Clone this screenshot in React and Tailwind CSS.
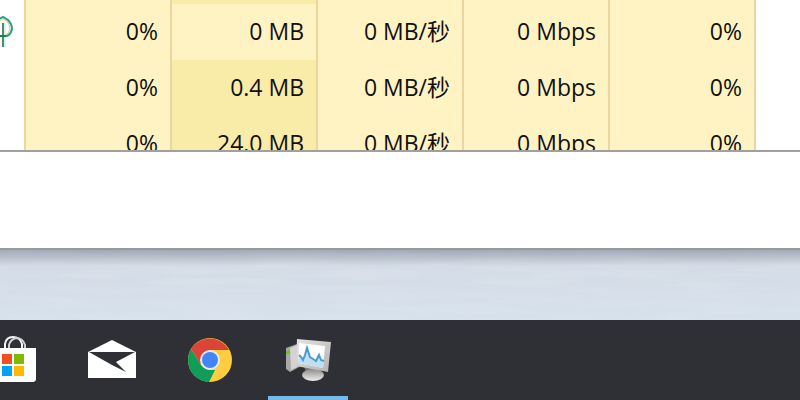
const columns = [
	{ key: "cpu", label: "CPU" },
	{ key: "memory", label: "Memory" },
	{ key: "disk", label: "Disk" },
	{ key: "network", label: "Network" },
	{ key: "gpu", label: "GPU" },
];

const processes = [
	{ id: 1, suspended: true, cpu: "0%", memory: "0 MB", disk: "0 MB/秒", network: "0 Mbps", gpu: "0%" },
	{ id: 2, cpu: "0%", memory: "0.4 MB", disk: "0 MB/秒", network: "0 Mbps", gpu: "0%", busy: true },
	{ id: 3, cpu: "0%", memory: "24.0 MB", disk: "0 MB/秒", network: "0 Mbps", gpu: "0%", busy: true },
];

const cellClass = (busy) =>
	busy
		? "border-r-2 border-[#ecd6a0] bg-[#f9eba8] pt-0 pr-3 pb-0.5 pl-0 text-right"
		: "border-r-2 border-[#ecd6a0] bg-[#fff3c4] pt-0 pr-3 pb-0.5 pl-0 text-right";

const LeafIcon = () => (
	<svg viewBox="0 0 14 34" className="block h-[34px] w-[14px]" fill="none">
		<path d="M-3 5L3 2L8 5Q12 9 12 14Q11 19 7 21H-3" stroke="#2c9d8c" strokeWidth="2" />
		<path d="M-3 7L3 4L7 6Q10 10 10 14Q9 18 6 20" stroke="#d8c860" strokeWidth="1" />
		<path d="M5 8V32" stroke="#c4fbfb" strokeWidth="2" />
		<path d="M3 8V32" stroke="#5c8268" strokeWidth="2" />
		<path d="M-2 21H6" stroke="#18843c" strokeWidth="2" />
	</svg>
);

const StoreIcon = () => (
	<svg viewBox="0 0 48 48" className="h-12 w-12" fill="none">
		<path d="M15 13V8Q16 1 23 1Q30 1 32 8V13" stroke="#f4f4f4" strokeWidth="2" />
		<path d="M19 13V9Q20 4 26 2Q33 2 35 9V13" stroke="#d0d0d2" strokeWidth="2" />
		<path d="M0 12H46V44L44 46H2L0 44Z" fill="#fff" />
		<path d="M12 18h10v10H12z" fill="#f25022" />
		<path d="M24 18h10v10H24z" fill="#7fba00" />
		<path d="M12 30h10v10H12z" fill="#00a4ef" />
		<path d="M24 30h10v10H24z" fill="#ffb900" />
	</svg>
);

const MailIcon = () => (
	<svg viewBox="0 -4 48 48" className="h-12 w-12">
		<path d="M0 12L24 0L48 12V38H0Z" fill="#fff" />
		<path d="M1 12H47L28 22L38 32L24 25Z" fill="#2f3035" />
	</svg>
);

const ChromeIcon = () => (
	<svg viewBox="0 0 46 46" className="h-[46px] w-[46px]">
		<circle cx="23" cy="23" r="22" fill="#ffcd40" />
		<path d="M4 12A22 22 0 0 1 42 13H23L14 28Z" fill="#db4437" />
		<path d="M4 12L14 28Q18 33 24 33H28L22 45A22 22 0 0 1 4 12Z" fill="#0f9d58" />
		<path d="M28 33L32 27L33 18L23 33Z" fill="#ffcd40" />
		<circle cx="23" cy="23" r="10" fill="#e6ebf2" />
		<circle cx="23" cy="23" r="8" fill="#4285f4" />
	</svg>
);

const MonitorIcon = () => (
	<svg viewBox="0 0 48 48" className="h-12 w-12">
		<defs>
			<linearGradient id="bezel" x1="0" y1="0" x2="1" y2="1">
				<stop offset="0" stopColor="#e5e4e2" />
				<stop offset="1" stopColor="#b4b2af" />
			</linearGradient>
			<linearGradient id="stand" x1="0" y1="0" x2="0" y2="1">
				<stop offset="0" stopColor="#8d8c8a" />
				<stop offset="1" stopColor="#f0efee" />
			</linearGradient>
		</defs>
		<path d="M2 12L13 8L17 30L6 36L2 33Z" fill="#a9a7a6" />
		<path d="M6 12L13 9V31L7 34Z" fill="#d5d3d1" />
		<path d="M2 15L6 14V18H2Z" fill="#63c51a" />
		<path d="M20 31L38 33L33 38H23Z" fill="#777674" />
		<ellipse cx="29" cy="39" rx="11" ry="6" fill="url(#stand)" />
		<path d="M13 3L47 6L44 36L12 30Z" fill="url(#bezel)" />
		<path d="M15 7L41 10L39 32L14 27Z" fill="#fbfdff" />
		<path d="M15 20L17 21L19 24L21 19L23 13L26 22L29 24L32 25L35 19L37 24L40 25L39 32L14 27Z" fill="#bfdff3" />
		<path d="M15 19L17 21L19 24L21 19L23 12L26 21L29 23L32 25L35 19L37 24L40 25" fill="none" stroke="#4c9bcc" strokeWidth="2" />
	</svg>
);

const apps = [
	{ name: "Microsoft Store", Icon: StoreIcon },
	{ name: "Mail", Icon: MailIcon },
	{ name: "Google Chrome", Icon: ChromeIcon },
	{ name: "Task Manager", Icon: MonitorIcon, active: true },
];

const ProcessTable = () => (
	<div className="h-[152px] overflow-hidden border-b-2 border-[#a0a0a0]">
		<table className="w-[756px] table-fixed border-collapse text-[23px] leading-8 text-[#111]">
			<colgroup>
				<col className="w-[25px]" />
				{columns.map((col) => (
					<col key={col.key} className="w-[146px]" />
				))}
			</colgroup>
			<tbody>
				{/* bottom edge of the row that is scrolled away */}
				<tr className="h-1" aria-hidden="true">
					<td className="border-r-2 border-[#ecd6a0] p-0" />
					{columns.map((col) => (
						<td key={col.key} className={cellClass(col.key === "memory")} />
					))}
				</tr>
				{processes.map((row) => (
					<tr key={row.id} className="h-14">
						<td className="border-r-2 border-[#ecd6a0] p-0">
							{row.suspended && <LeafIcon />}
						</td>
						{columns.map((col) => (
							<td
								key={col.key}
								aria-label={`${col.label} ${row[col.key]}`}
								className={cellClass(row.busy && col.key === "memory")}
							>
								{row[col.key]}
							</td>
						))}
					</tr>
				))}
			</tbody>
		</table>
	</div>
);

const Wallpaper = () => (
	<div className="relative h-[70px] overflow-hidden bg-linear-to-b from-[#d3dae4] to-[#d6e1ec]">
		<svg className="h-full w-full opacity-30" aria-hidden="true">
			<filter id="streaks">
				<feTurbulence type="fractalNoise" baseFrequency="0.012 0.14" numOctaves="3" seed="4" />
				<feColorMatrix values="0 0 0 0 0.76  0 0 0 0 0.81  0 0 0 0 0.87  3 0 0 0 -1.2" />
			</filter>
			<rect width="100%" height="100%" filter="url(#streaks)" />
		</svg>
		<div className="absolute inset-x-0 top-0 h-4 bg-linear-to-b from-[#828997]/60 to-transparent" />
	</div>
);

const Taskbar = () => (
	<nav className="h-20 overflow-hidden bg-[#2f3035]">
		<div className="-ml-[26px] flex gap-[18px]">
			{apps.map(({ name, Icon, active }) => (
				<button
					key={name}
					type="button"
					aria-label={name}
					className={
						active
							? "flex h-20 w-20 shrink-0 items-center justify-center border-b-4 border-[#76b9ed] pt-1"
							: "flex h-20 w-20 shrink-0 items-center justify-center"
					}
				>
					<Icon />
				</button>
			))}
		</div>
	</nav>
);

const App = () => (
	<main className="overflow-hidden bg-white font-['Open_Sans','Noto_Sans_CJK_SC',sans-serif]">
		<ProcessTable />
		<div className="h-[98px] border-b-2 border-[#969a9f] bg-white" />
		<Wallpaper />
		<Taskbar />
	</main>
);

export default App;
